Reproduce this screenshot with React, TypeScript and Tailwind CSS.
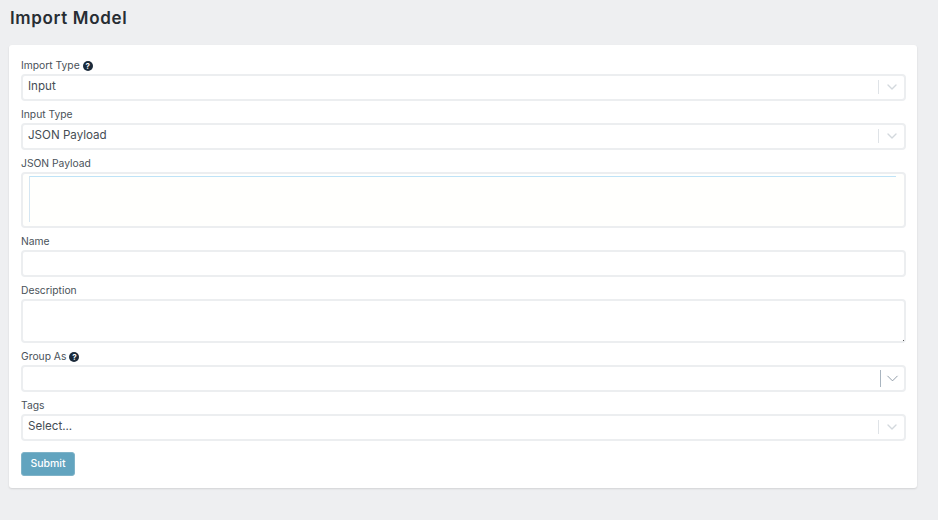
import { ChevronDown } from "lucide-react"

const font = "font-['Inter','Noto_Sans',sans-serif]"

// small round help badge next to a label
const Help = () => (
    <span className="ml-[3px] flex h-[10px] w-[10px] items-center justify-center rounded-full bg-[#1b2a3a] text-[8px] leading-none font-bold text-white">?</span>
)

const Label = ({ text, help }: { text: string; help?: boolean }) => (
    <div className="flex h-[15px] items-center pb-[2px] text-[10.3px] text-[#4a5259]">
        {text}
        {help && <Help />}
    </div>
)

const Select = ({ value, strong }: { value?: string; strong?: boolean }) => (
    <div className="flex h-[27px] items-center rounded-[4px] border-2 border-[#eceef0] bg-white pb-[1px] pl-[5px] text-[11.6px] text-[#454d54]">
        <span className="flex-1">{value}</span>
        <span className={strong ? "h-[17px] w-px bg-[#a9b5c0]" : "h-[14px] w-px bg-[#dfe3e7]"} />
        <span className={strong ? "flex w-[23px] justify-center" : "flex w-[25px] justify-center"}>
            <ChevronDown size={strong ? 19 : 16} strokeWidth={strong ? 1.2 : 2} className={strong ? "text-[#8c98a4]" : "text-[#d3d8dd]"} />
        </span>
    </div>
)

const App = () => {
    return (
        <div className={`h-[520px] w-[938px] overflow-hidden bg-[#eeeff1] ${font}`}>
            <h1 className="flex h-[45px] items-start pl-[10px] pt-[9px] text-[17px] leading-[19px] font-semibold tracking-[0.65px] text-[#272d33]">Import Model</h1>

            <div className="ml-[9px] flex h-[443px] w-[908px] flex-col rounded-[3px] bg-white pl-[12px] pr-[11px] pt-[14px] shadow-[0_1px_2px_rgba(0,0,0,0.12)]">
                <div className="mb-[7px]">
                    <Label text="Import Type" help />
                    <Select value="Input" />
                </div>
                <div className="mb-[7px]">
                    <Label text="Input Type" />
                    <Select value="JSON Payload" />
                </div>
                <div className="mb-[7px]">
                    <Label text="JSON Payload" />
                    <div className="h-[56px] rounded-[4px] border-2 border-[#eceef0] bg-[#fffffd] pl-[6px] pr-[8px] pt-[2px]">
                        <div className="h-[46px] border-l border-t border-l-[#d5e6f2] border-t-[#bfe3f7]" />
                    </div>
                </div>
                <div className="mb-[7px]">
                    <Label text="Name" />
                    <div className="h-[27px] rounded-[4px] border-2 border-[#eceef0] bg-white" />
                </div>
                <div className="mb-[7px]">
                    <Label text="Description" />
                    <div className="relative">
                        <textarea readOnly className="block h-[44px] w-full resize-none rounded-[4px] border-2 border-[#eceef0] bg-white outline-none" />
                        <span className="absolute bottom-[2px] right-[2px] h-px w-px bg-[#555]" />
                    </div>
                </div>
                <div className="mb-[7px]">
                    <Label text="Group As" help />
                    <Select strong />
                </div>
                <div className="mb-[11px]">
                    <Label text="Tags" />
                    <Select value="Select..." />
                </div>
                <button className="h-[24px] w-[54px] rounded-[3px] border border-[#7fb3c8] bg-[#62a4bf] text-[10.5px] font-medium text-white">Submit</button>
            </div>
        </div>
    )
}

export default App
